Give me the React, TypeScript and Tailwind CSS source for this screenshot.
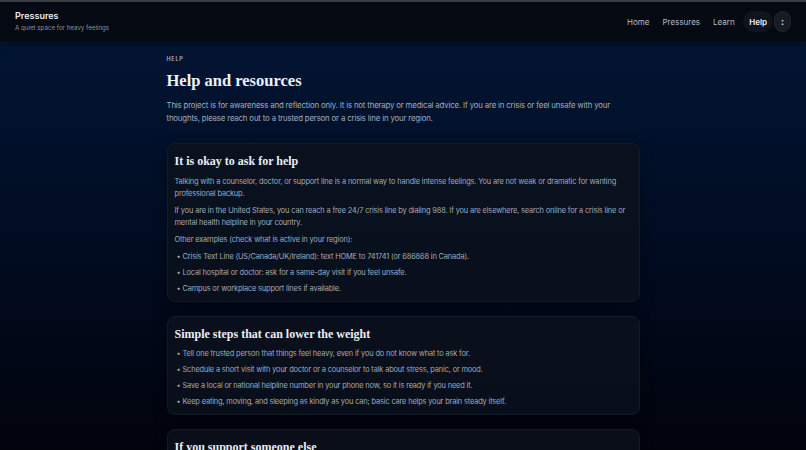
import React from "react";

const serif = { fontFamily: '"Liberation Serif", "DejaVu Serif", serif' };

const navItems = ["Home", "Pressures", "Learn"];

const sections = [
  {
    title: "It is okay to ask for help",
    paras: [
      "Talking with a counselor, doctor, or support line is a normal way to handle intense feelings. You are not weak or dramatic for wanting professional backup.",
      "If you are in the United States, you can reach a free 24/7 crisis line by dialing 988. If you are elsewhere, search online for a crisis line or mental health helpline in your country.",
      "Other examples (check what is active in your region):",
    ],
    items: [
      "Crisis Text Line (US/Canada/UK/Ireland): text HOME to 741741 (or 686868 in Canada).",
      "Local hospital or doctor: ask for a same-day visit if you feel unsafe.",
      "Campus or workplace support lines if available.",
    ],
  },
  {
    title: "Simple steps that can lower the weight",
    paras: [],
    items: [
      "Tell one trusted person that things feel heavy, even if you do not know what to ask for.",
      "Schedule a short visit with your doctor or a counselor to talk about stress, panic, or mood.",
      "Save a local or national helpline number in your phone now, so it is ready if you need it.",
      "Keep eating, moving, and sleeping as kindly as you can; basic care helps your brain steady itself.",
    ],
  },
  {
    title: "If you support someone else",
    paras: [
      "Listen without rushing to fix things. Ask directly how they are doing and whether they feel safe, and help them reach a professional if they need more support.",
    ],
    items: [],
  },
];

export default function App() {
  return (
    <div
      className="min-h-screen bg-gradient-to-b from-[#021737] via-[#010b1f] to-[#010206] text-[#a9b1c0]"
      style={{ fontFamily: 'Inter, "Noto Sans", sans-serif' }}
    >
      {/* Header */}
      <header className="h-[41px] border-t-2 border-[#3a3d43] bg-[#050911] flex items-center justify-between pl-[15px] pr-[15px] shadow-[0_4px_10px_rgba(0,0,0,0.35)]">
        <div className="flex flex-col">
          <span className="text-[9px] font-semibold text-[#e9edf4] leading-[12px]">Pressures</span>
          <span className="text-[6.2px] text-[#8b93a2] leading-[10px] mt-[1px]">A quiet space for heavy feelings</span>
        </div>
        <nav className="flex items-center text-[8px] text-[#b6bdc9]">
          {navItems.map((n) => (
            <span key={n} className="px-[6.5px]">{n}</span>
          ))}
          <span className="ml-[2px] px-[6px] h-[21px] flex items-center rounded-full bg-[#0f141d] text-[#f0f3f8] font-semibold">Help</span>
          <span className="ml-[1px] w-[17px] h-[21px] flex items-center justify-center rounded-full bg-[#161b24] border border-[#222833] text-[#e6e9ef] font-bold text-[9px]">
            :
          </span>
        </nav>
      </header>

      {/* Main */}
      <main className="w-[473px] mx-auto pt-[14px] pb-10">
        <p className="text-[5.5px] font-semibold tracking-[0.14em] text-[#aab2c1] leading-[8px]">HELP</p>
        <h1 style={serif} className="text-[16.5px] font-bold text-[#eef1f6] leading-[24px] mt-[6px]">
          Help and resources
        </h1>
        <p className="text-[7.8px] tracking-[-0.02em] leading-[13px] mt-[6px] text-[#a4acbb]">
          This project is for awareness and reflection only. It is not therapy or medical advice. If you are in crisis or feel unsafe with your thoughts, please reach out to a trusted person or a crisis line in your region.
        </p>

        <div className="flex flex-col gap-[14px] mt-[18px]">
          {sections.map((s) => (
            <section
              key={s.title}
              className="rounded-[8px] bg-[#0b111d]/80 border border-[#141b28] shadow-[0_6px_14px_rgba(0,0,0,0.35)] px-[7px] pt-[8px] pb-[6px]"
            >
              <h2 style={serif} className="text-[12px] font-bold text-[#e9edf3] leading-[18px]">
                {s.title}
              </h2>
              <div className="flex flex-col gap-[5px] mt-[6px]">
                {s.paras.map((p) => (
                  <p key={p} className="text-[7.4px] tracking-[-0.02em] leading-[12px] text-[#a2aab9]">{p}</p>
                ))}
              </div>
              {s.items.length > 0 && (
                <ul className={"flex flex-col gap-[4px] " + (s.paras.length ? "mt-[5px]" : "mt-[-1px]")}>
                  {s.items.map((it) => (
                    <li key={it} className="flex items-start text-[7.4px] tracking-[-0.02em] leading-[12px] text-[#a2aab9]">
                      <span className="w-[8px] shrink-0 pl-[2px]">•</span>
                      <span>{it}</span>
                    </li>
                  ))}
                </ul>
              )}
            </section>
          ))}
        </div>
      </main>
    </div>
  );
}
